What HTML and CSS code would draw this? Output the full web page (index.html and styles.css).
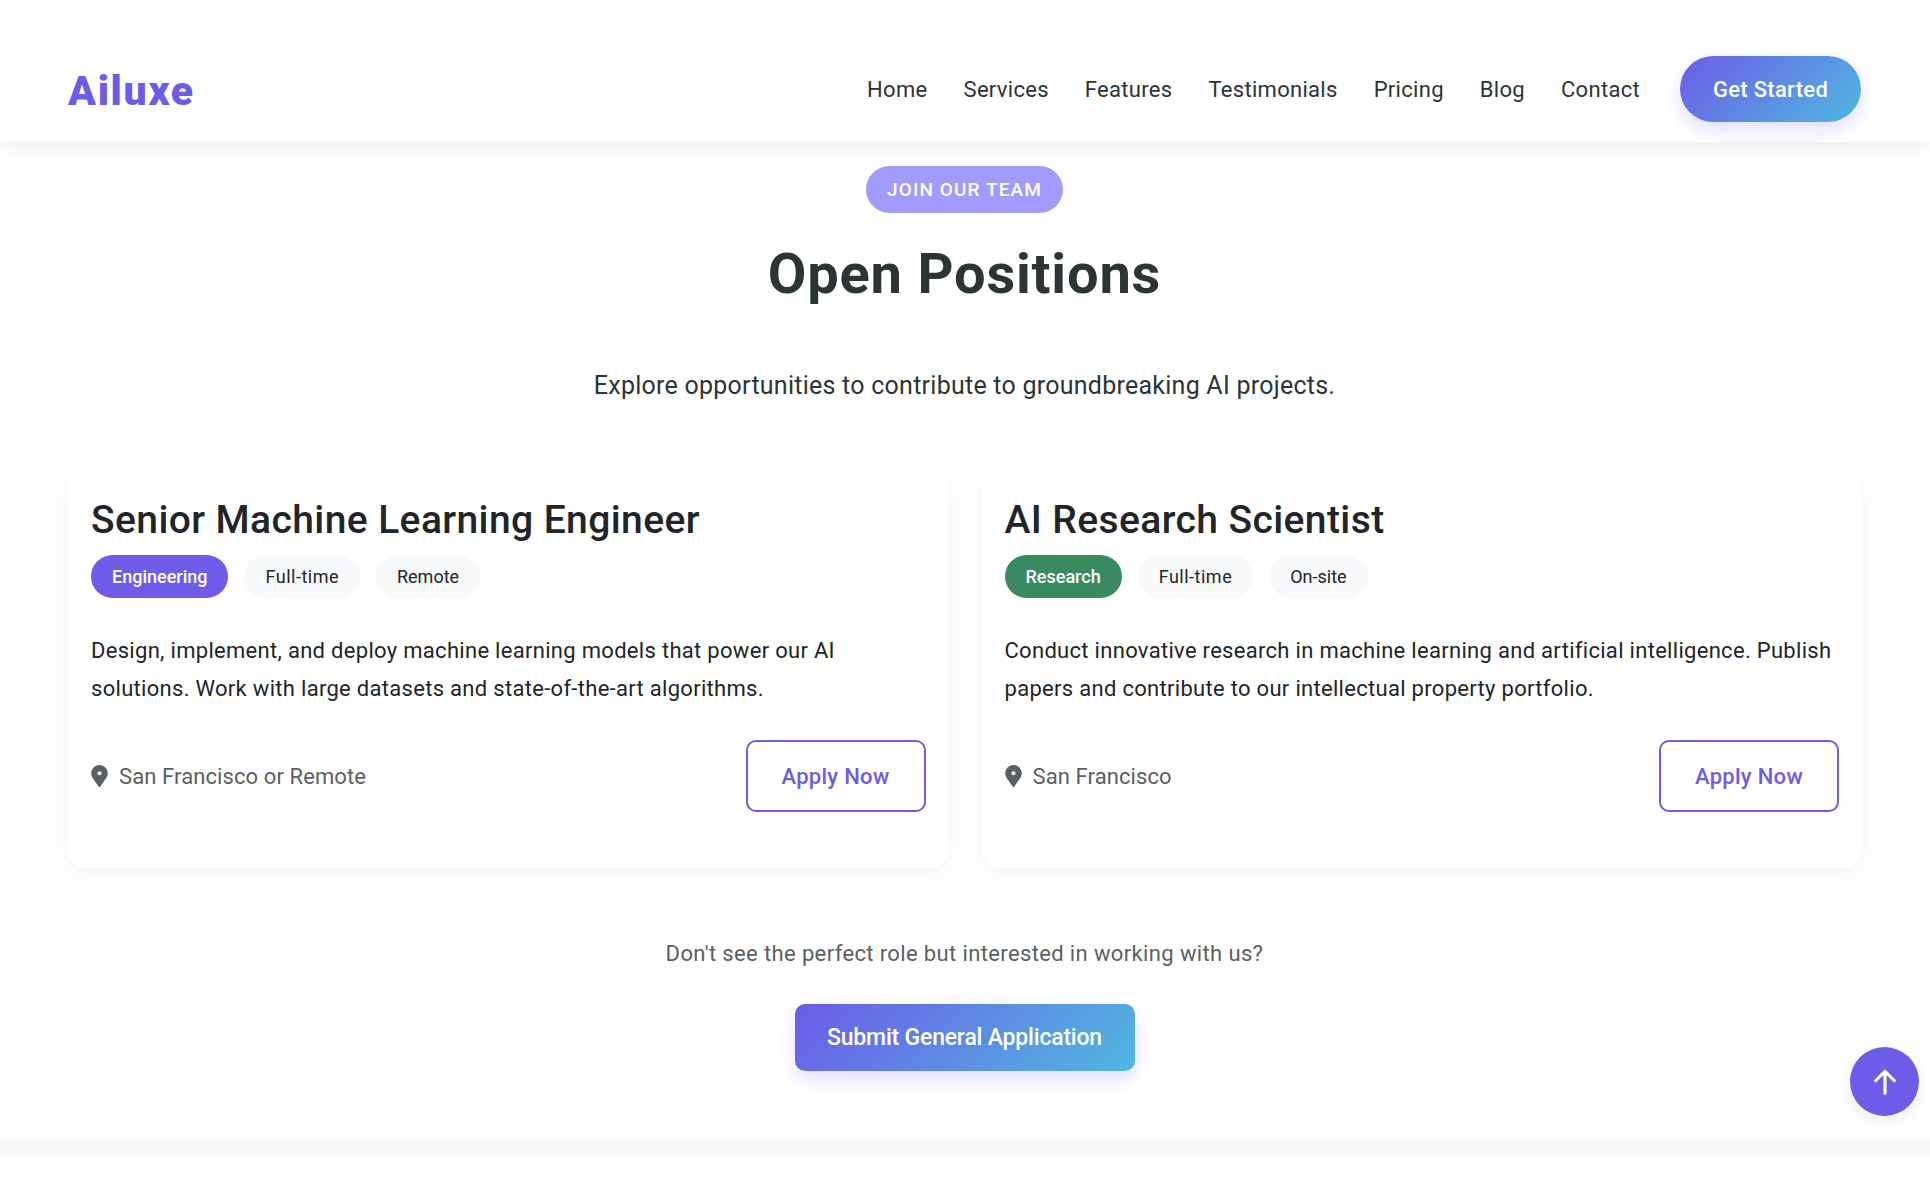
FILE: index.html
```html
<!DOCTYPE html>
<html lang="en">
<head>
<meta charset="utf-8">
<title>Ailuxe - Open Positions</title>
<link rel="stylesheet" href="styles.css">
</head>
<body>
<header class="site-header">
  <a class="logo" href="#">Ailuxe</a>
  <nav class="nav">
    <a href="#">Home</a>
    <a href="#">Services</a>
    <a href="#">Features</a>
    <a href="#">Testimonials</a>
    <a href="#">Pricing</a>
    <a href="#">Blog</a>
    <a href="#">Contact</a>
    <a class="cta" href="#">Get Started</a>
  </nav>
</header>
<main class="careers">
  <div class="section-head">
    <span class="badge">JOIN OUR TEAM</span>
    <h1>Open Positions</h1>
    <p class="lead">Explore opportunities to contribute to groundbreaking AI projects.</p>
  </div>
  <div class="jobs">
    <article class="job">
      <h2>Senior Machine Learning Engineer</h2>
      <div class="tags">
        <span class="tag tag-eng">Engineering</span>
        <span class="tag tag-wide">Full-time</span>
        <span class="tag">Remote</span>
      </div>
      <p class="desc">Design, implement, and deploy machine learning models that power our AI solutions. Work with large datasets and state-of-the-art algorithms.</p>
      <div class="job-foot">
        <span class="loc"><svg viewBox="0 0 384 512" class="pin"><path d="M172 502C27 291 0 268 0 192 0 86 86 0 192 0s192 86 192 192c0 76-27 99-172 310-10 14-30 14-40 0zM192 240a48 48 0 1 0 0-96 48 48 0 0 0 0 96z"/></svg>San Francisco or Remote</span>
        <a class="apply" href="#">Apply Now</a>
      </div>
    </article>
    <article class="job">
      <h2>AI Research Scientist</h2>
      <div class="tags">
        <span class="tag tag-res">Research</span>
        <span class="tag tag-wide">Full-time</span>
        <span class="tag">On-site</span>
      </div>
      <p class="desc">Conduct innovative research in machine learning and artificial intelligence. Publish papers and contribute to our intellectual property portfolio.</p>
      <div class="job-foot">
        <span class="loc"><svg viewBox="0 0 384 512" class="pin"><path d="M172 502C27 291 0 268 0 192 0 86 86 0 192 0s192 86 192 192c0 76-27 99-172 310-10 14-30 14-40 0zM192 240a48 48 0 1 0 0-96 48 48 0 0 0 0 96z"/></svg>San Francisco</span>
        <a class="apply" href="#">Apply Now</a>
      </div>
    </article>
  </div>
  <div class="general">
    <p>Don't see the perfect role but interested in working with us?</p>
    <a class="submit" href="#">Submit General Application</a>
  </div>
</main>
<div class="strip"></div>
<a class="to-top" href="#" aria-label="Back to top"><svg viewBox="0 0 24 24"><path d="M12 21V4M4.5 11 12 3.5 19.5 11"/></svg></a>
</body>
</html>
```
FILE: styles.css
```css
* { box-sizing: border-box; }
html, body { margin: 0; padding: 0; }
body { font-family: Roboto, "Noto Sans", sans-serif; color: #2d3436; background: #fff; height: 1200px; overflow: hidden; }
a { text-decoration: none; color: inherit; }

.site-header { position: relative; z-index: 2; height: 142px; background: #fff; padding: 0 69px 0 68px; display: flex; align-items: flex-end; justify-content: space-between; box-shadow: 0 4px 20px rgba(0,0,0,.08); }
.logo { font-size: 41px; line-height: 48px; font-weight: 900; letter-spacing: 1.7px; color: #6c5ce7; margin-bottom: 27px; }
.nav { display: flex; align-items: center; gap: 36px; padding-bottom: 20px; font-size: 22px; letter-spacing: .3px; }
.cta { margin-left: 4px; width: 181px; height: 66px; border-radius: 33px; color: #fff; font-weight: 500; display: flex; align-items: center; justify-content: center; background: linear-gradient(135deg, #6c5ce7, #4fb8e0); box-shadow: 0 8px 20px rgba(108,92,231,.2); }

.careers { padding: 24px 69px 0 68px; }
.section-head { text-align: center; }
.badge { display: inline-block; height: 47px; line-height: 47px; padding: 0 21px; border-radius: 24px; background: #a29bfe; color: #fff; font-size: 19px; font-weight: 500; letter-spacing: 1.1px; }
h1 { margin: 29px 0 0; font-size: 56px; line-height: 64px; font-weight: 700; letter-spacing: .8px; color: #2d3436; }
.lead { margin: 60px 0 0; font-size: 25px; line-height: 40px; letter-spacing: .25px; color: #2d3436; }

.jobs { margin-top: 65px; display: grid; grid-template-columns: 1fr 1fr; gap: 34px; }
.job { height: 397px; padding: 24px 22px 22px 23px; border-radius: 17px; background: #fff; box-shadow: 0 5px 25px rgba(0,0,0,.05); }
h2 { margin: 0; font-size: 39px; line-height: 50px; font-weight: 500; letter-spacing: .4px; color: #212529; }
.tags { margin-top: 10px; display: flex; gap: 16px; }
.tag { height: 43px; line-height: 43px; padding: 0 21px; border-radius: 22px; background: #f8f9fa; font-size: 18px; color: #212529; }
.tag-wide { letter-spacing: .5px; }
.tag-eng { background: #6c5ce7; color: #fff; font-weight: 500; }
.tag-res { background: #3a8a5f; color: #fff; font-weight: 500; }
.desc { margin: 34px 0 0; font-size: 22px; line-height: 38px; letter-spacing: .3px; color: #212529; }
.job-foot { margin-top: 32px; display: flex; align-items: center; justify-content: space-between; }
.loc { display: flex; align-items: center; gap: 11px; font-size: 22px; letter-spacing: .1px; color: #5a5f63; }
.pin { width: 17px; height: 22px; fill: #5a5f63; }
.apply { width: 180px; height: 72px; display: flex; align-items: center; justify-content: center; border: 2px solid #6c5ce7; border-radius: 10px; color: #6c5ce7; font-size: 22px; font-weight: 500; letter-spacing: .3px; }

.general { margin-top: 68px; text-align: center; }
.general p { margin: 0; font-size: 22px; line-height: 36px; letter-spacing: .37px; color: #5a5f63; }
.submit { margin-top: 32px; display: inline-flex; align-items: center; justify-content: center; width: 340px; height: 67px; border-radius: 10px; color: #fff; font-size: 23px; font-weight: 500; letter-spacing: -.2px; background: linear-gradient(135deg, #6c5ce7, #4fb8e0); box-shadow: 0 8px 20px rgba(108,92,231,.2); }

.strip { margin-top: 66px; height: 20px; background: #f8f9fa; }
.to-top { position: fixed; right: 11px; bottom: 84px; width: 69px; height: 69px; border-radius: 50%; background: #6c5ce7; display: flex; align-items: center; justify-content: center; box-shadow: 0 5px 20px rgba(0,0,0,.08); }
.to-top svg { width: 30px; height: 30px; fill: none; stroke: #fff; stroke-width: 2.5; stroke-linecap: round; stroke-linejoin: round; }
```
